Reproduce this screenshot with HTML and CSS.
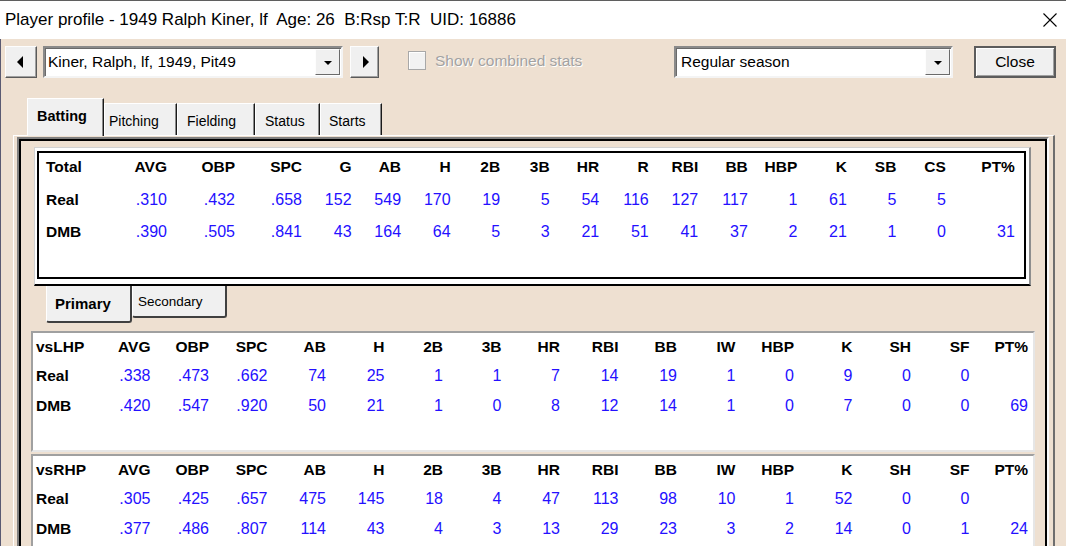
FILE: index.html
```html
<!DOCTYPE html>
<html>
<head>
<meta charset="utf-8">
<title>Player profile</title>
<link rel="stylesheet" href="styles.css">
</head>
<body>
<div class="window">
  <div class="titlebar">
    <span class="title">Player profile - 1949 Ralph Kiner, lf&nbsp; Age: 26&nbsp; B:Rsp T:R&nbsp; UID: 16886</span>
    <svg class="xicon" viewBox="0 0 14 14" width="14" height="14"><path d="M0.5 0.5 L13.5 13.5 M13.5 0.5 L0.5 13.5" stroke="#000" stroke-width="1.1" fill="none"/></svg>
  </div>
  <div class="client">
    <div class="toolbar">
      <div class="btn arrow-l"><span class="tri-left"></span></div>
      <div class="combo player"><span class="combo-text">Kiner, Ralph, lf, 1949, Pit49</span><span class="drop"><span class="tri-down"></span></span></div>
      <div class="btn arrow-r"><span class="tri-right"></span></div>
      <div class="check"><span class="box"></span><span class="check-text">Show combined stats</span></div>
      <div class="combo season"><span class="combo-text">Regular season</span><span class="drop"><span class="tri-down"></span></span></div>
      <div class="btn close">Close</div>
    </div>
    <div class="tabs">
      <div class="tab active t-bat">Batting</div>
      <div class="tab t-pit">Pitching</div>
      <div class="tab t-fld">Fielding</div>
      <div class="tab t-sta">Status</div>
      <div class="tab t-str">Starts</div>
    </div>
    <div class="tabpage">
      <div class="group">
        <div class="group-inner">
          <div class="total-frame">
            <div class="total-box">
              <div class="grid total-grid">
                <div class="hl">Total</div><div class="h">AVG</div><div class="h">OBP</div><div class="h">SPC</div><div class="h">G</div><div class="h">AB</div><div class="h">H</div><div class="h">2B</div><div class="h">3B</div><div class="h">HR</div><div class="h">R</div><div class="h">RBI</div><div class="h">BB</div><div class="h">HBP</div><div class="h">K</div><div class="h">SB</div><div class="h">CS</div><div class="h">PT%</div>
                <div class="hl">Real</div><div class="n">.310</div><div class="n">.432</div><div class="n">.658</div><div class="n">152</div><div class="n">549</div><div class="n">170</div><div class="n">19</div><div class="n">5</div><div class="n">54</div><div class="n">116</div><div class="n">127</div><div class="n">117</div><div class="n">1</div><div class="n">61</div><div class="n">5</div><div class="n">5</div><div class="n"></div>
                <div class="hl">DMB</div><div class="n">.390</div><div class="n">.505</div><div class="n">.841</div><div class="n">43</div><div class="n">164</div><div class="n">64</div><div class="n">5</div><div class="n">3</div><div class="n">21</div><div class="n">51</div><div class="n">41</div><div class="n">37</div><div class="n">2</div><div class="n">21</div><div class="n">1</div><div class="n">0</div><div class="n">31</div>
              </div>
            </div>
          </div>
          <div class="subtabs">
            <div class="subtab primary">Primary</div>
            <div class="subtab secondary">Secondary</div>
          </div>
          <div class="split-box">
            <div class="grid split-grid">
              <div class="hl">vsLHP</div><div class="h">AVG</div><div class="h">OBP</div><div class="h">SPC</div><div class="h">AB</div><div class="h">H</div><div class="h">2B</div><div class="h">3B</div><div class="h">HR</div><div class="h">RBI</div><div class="h">BB</div><div class="h">IW</div><div class="h">HBP</div><div class="h">K</div><div class="h">SH</div><div class="h">SF</div><div class="h">PT%</div>
              <div class="hl">Real</div><div class="n">.338</div><div class="n">.473</div><div class="n">.662</div><div class="n">74</div><div class="n">25</div><div class="n">1</div><div class="n">1</div><div class="n">7</div><div class="n">14</div><div class="n">19</div><div class="n">1</div><div class="n">0</div><div class="n">9</div><div class="n">0</div><div class="n">0</div><div class="n"></div>
              <div class="hl">DMB</div><div class="n">.420</div><div class="n">.547</div><div class="n">.920</div><div class="n">50</div><div class="n">21</div><div class="n">1</div><div class="n">0</div><div class="n">8</div><div class="n">12</div><div class="n">14</div><div class="n">1</div><div class="n">0</div><div class="n">7</div><div class="n">0</div><div class="n">0</div><div class="n">69</div>
            </div>
          </div>
          <div class="split-box second">
            <div class="grid split-grid">
              <div class="hl">vsRHP</div><div class="h">AVG</div><div class="h">OBP</div><div class="h">SPC</div><div class="h">AB</div><div class="h">H</div><div class="h">2B</div><div class="h">3B</div><div class="h">HR</div><div class="h">RBI</div><div class="h">BB</div><div class="h">IW</div><div class="h">HBP</div><div class="h">K</div><div class="h">SH</div><div class="h">SF</div><div class="h">PT%</div>
              <div class="hl">Real</div><div class="n">.305</div><div class="n">.425</div><div class="n">.657</div><div class="n">475</div><div class="n">145</div><div class="n">18</div><div class="n">4</div><div class="n">47</div><div class="n">113</div><div class="n">98</div><div class="n">10</div><div class="n">1</div><div class="n">52</div><div class="n">0</div><div class="n">0</div><div class="n"></div>
              <div class="hl">DMB</div><div class="n">.377</div><div class="n">.486</div><div class="n">.807</div><div class="n">114</div><div class="n">43</div><div class="n">4</div><div class="n">3</div><div class="n">13</div><div class="n">29</div><div class="n">23</div><div class="n">3</div><div class="n">2</div><div class="n">14</div><div class="n">0</div><div class="n">1</div><div class="n">24</div>
            </div>
          </div>
        </div>
      </div>
    </div>
  </div>
</div>
</body>
</html>
```
FILE: styles.css
```css
html, body {
  margin: 0;
  padding: 0;
  background: #eee0d1;
}

.window {
  width: 1066px;
  height: 546px;
  overflow: hidden;
  display: flex;
  flex-direction: column;
  font-family: "Liberation Sans", Arial, sans-serif;
  background: #eee0d1;
  color: #000;
}

/* Title bar */
.titlebar {
  flex: none;
  height: 38px;
  border-top: 1px solid #5f5f5f;
  background: #fff;
  display: flex;
  align-items: center;
  padding: 0 9px 0 5px;
}
.title {
  font-size: 17px;
  white-space: pre;
}
.xicon {
  margin-left: auto;
  display: block;
}

/* Client area */
.client {
  flex: 1;
  min-height: 0;
  display: flex;
  flex-direction: column;
  border-left: 1px solid #5a5a72;
}

/* Toolbar */
.toolbar {
  flex: none;
  height: 32px;
  margin-top: 7px;
  padding: 0 10px 0 4px;
  display: flex;
  align-items: flex-start;
}
.btn {
  box-sizing: border-box;
  height: 32px;
  background: #f0f0f0;
  border: 1px solid;
  border-color: #fdfdfd #5a5a5a #5a5a5a #fdfdfd;
  box-shadow: inset -1px -1px 0 #a0a0a0;
  display: flex;
  align-items: center;
  justify-content: center;
}
.arrow-l { width: 32px; }
.arrow-r { width: 29px; margin-left: 7px; }
.tri-left {
  width: 0; height: 0;
  border-top: 6px solid transparent;
  border-bottom: 6px solid transparent;
  border-right: 6px solid #000;
  margin-right: 2px;
}
.tri-right {
  width: 0; height: 0;
  border-top: 6px solid transparent;
  border-bottom: 6px solid transparent;
  border-left: 6px solid #000;
  margin-left: 2px;
}
.tri-down {
  width: 0; height: 0;
  border-left: 4px solid transparent;
  border-right: 4px solid transparent;
  border-top: 4px solid #000;
  margin-top: 2px;
}

.combo {
  box-sizing: border-box;
  height: 32px;
  border: 2px solid;
  border-color: #8a8a8a #f4f4f4 #f4f4f4 #8a8a8a;
  box-shadow: inset 1px 1px 0 #6a6a6a;
  background: #fff;
  display: flex;
  align-items: center;
  padding: 0 1px 0 3px;
}
.combo-text {
  font-size: 15.5px;
  white-space: nowrap;
}
.drop {
  box-sizing: border-box;
  margin-left: auto;
  width: 25px;
  height: 26px;
  background: #f0f0f0;
  border: 1px solid;
  border-color: #fdfdfd #6a6a6a #6a6a6a #fdfdfd;
  display: flex;
  align-items: center;
  justify-content: center;
}
.player { width: 300px; margin-left: 6px; }
.season { width: 279px; margin-left: auto; padding-left: 5px; }

.check {
  margin-left: 29px;
  height: 32px;
  display: flex;
  align-items: center;
}
.box {
  box-sizing: border-box;
  width: 18px;
  height: 19px;
  border: 1px solid #a8a8a8;
  box-shadow: inset 1px 1px 0 #fff;
  background: #f2f2f2;
  margin-top: -3px;
}
.check-text {
  margin-left: 9px;
  margin-top: -3px;
  font-size: 15.5px;
  color: #a2a2a2;
  text-shadow: 1px 1px 0 #fff;
  white-space: nowrap;
}

.close {
  width: 82px;
  margin-left: 21px;
  border: 2px solid #5c5c5c;
  box-shadow: inset 1px 1px 0 #fff, inset -1px -1px 0 #a0a0a0;
  font-size: 15.5px;
}

/* Main tabs */
.tabs {
  flex: none;
  height: 37px;
  margin-top: 20px;
  padding-left: 26px;
  display: flex;
  align-items: flex-end;
}
.tab {
  box-sizing: border-box;
  height: 32px;
  background: #f0f0f0;
  border-top: 1px solid #fff;
  border-left: 1px solid #fff;
  border-right: 1px solid #1a1a1a;
  box-shadow: inset -1px 0 0 #8a8a8a;
  font-size: 14px;
  display: flex;
  align-items: center;
  padding-top: 2px;
  white-space: nowrap;
}
.tab.active {
  height: 38px;
  margin-bottom: -1px;
  position: relative;
  z-index: 1;
  font-weight: bold;
  font-size: 14.5px;
  padding-top: 0;
  padding-bottom: 3px;
}
.t-bat { width: 77px; padding-left: 9px; }
.t-pit { width: 73px; padding-left: 4px; }
.t-fld { width: 78px; padding-left: 9px; }
.t-sta { width: 65px; padding-left: 9px; }
.t-str { width: 62px; padding-left: 8px; }

/* Tab page */
.tabpage {
  flex: 1;
  min-height: 0;
  margin: 0 11px 0 12px;
  border-top: 1px solid #fff;
  border-left: 1px solid #fff;
  border-right: 2px solid #6e6e6e;
  display: flex;
  flex-direction: column;
}
.group {
  flex: 1;
  margin: 1px 4px 0 3px;
  border-left: 2px solid #808080;
  border-top: 2px solid #808080;
  border-right: 2px solid #fafafa;
  display: flex;
  flex-direction: column;
}
.group-inner {
  flex: 1;
  border-left: 2px solid #000;
  border-top: 2px solid #000;
  border-right: 2px solid #000;
}

/* Total box */
.total-frame {
  margin: 6px 14px 0 13px;
  border-top: 1px solid #d2d2d2;
  border-left: 1px solid #d2d2d2;
  border-right: 2px solid #8e8e8e;
  border-bottom: 2px solid #000;
  padding: 3px 3px 5px 2px;
  background: #fff;
}
.total-box {
  border: 2px solid #000;
  padding: 0 0 31px 7px;
}

.grid {
  display: grid;
  align-items: center;
  white-space: nowrap;
}
.total-grid {
  grid-template-columns: 53px 68px 68px 67px repeat(13, 49.54px) 69px;
  grid-template-rows: 28px 37px 28px;
}
.split-grid {
  grid-template-columns: 56px repeat(16, 58.5px);
  grid-template-rows: 27px 32px 28px;
}
.hl {
  font-weight: bold;
  font-size: 15.5px;
  text-align: left;
}
.h {
  font-weight: bold;
  font-size: 15.5px;
  text-align: right;
}
.n {
  font-size: 16px;
  color: #2410ff;
  text-align: right;
}

/* Sub tabs */
.subtabs {
  height: 45px;
  margin-left: 25px;
  display: flex;
  align-items: flex-start;
}
.subtab {
  box-sizing: border-box;
  background: #f0f0f0;
  border-left: 1px solid #fff;
  border-right: 2px solid #404040;
  border-bottom: 2px solid #404040;
  border-radius: 0 0 3px 3px;
  display: flex;
  align-items: center;
  white-space: nowrap;
}
.primary {
  width: 86px;
  height: 37px;
  padding-left: 8px;
  font-weight: bold;
  font-size: 15px;
}
.secondary {
  width: 95px;
  height: 32px;
  padding-left: 5px;
  font-size: 13.5px;
}

/* Split boxes */
.split-box {
  margin: 0 10px;
  border: 2px solid;
  border-color: #a0a0a0 #e6e6e6 #e6e6e6 #a0a0a0;
  background: #fff;
  padding: 0 5px 30px 3px;
}
.split-box.second {
  margin-top: 2px;
}
```
